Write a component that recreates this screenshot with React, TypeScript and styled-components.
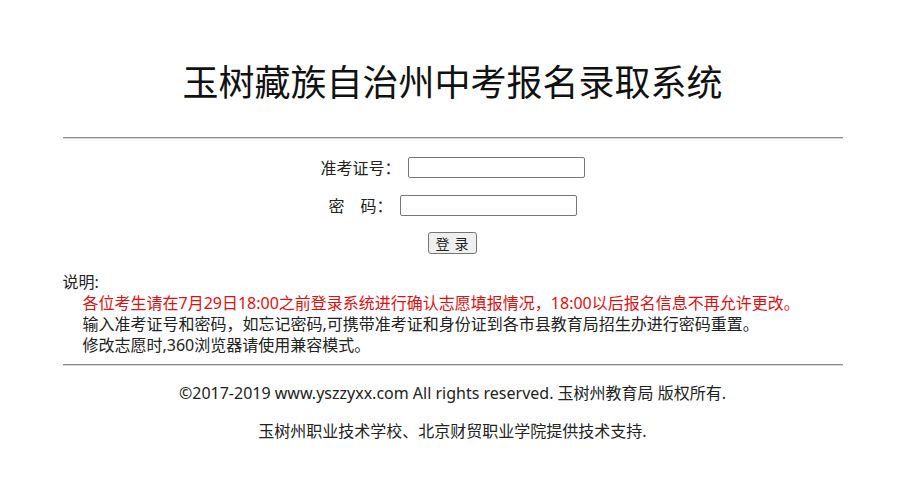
import React from "react";
import styled, { createGlobalStyle } from "styled-components";

const GlobalStyle = createGlobalStyle`
  html, body {
    margin: 0;
    padding: 0;
    background: #fff;
  }
  body {
    font-family: "Noto Sans", "Noto Sans CJK SC", sans-serif;
    color: #222;
    font-size: 16px;
  }
`;

const Page = styled.div`
  width: 780px;
  margin: 0 auto;
`;

const Title = styled.h1`
  margin: 58px 0 0;
  font-family: "Noto Sans CJK SC", sans-serif;
  font-size: 36px;
  font-weight: normal;
  line-height: 44px;
  text-align: center;
  color: #111;
`;

const Rule = styled.hr<{ $top: number }>`
  margin: ${(p) => p.$top}px 0 0;
  height: 0;
  border: none;
  border-top: 1px solid #8c8c8c;
  border-bottom: 1px solid #d8d8d8;
`;

const Form = styled.form`
  margin-top: 9px;
  display: flex;
  flex-direction: column;
  align-items: center;
`;

const Row = styled.div`
  height: 38px;
  display: flex;
  align-items: center;
  justify-content: center;
`;

const Label = styled.label`
  font-family: "Noto Sans CJK SC", sans-serif;
  font-size: 16px;
  line-height: 20px;
  white-space: pre;
`;

const TextInput = styled.input`
  box-sizing: border-box;
  width: 177px;
  height: 21px;
  margin-left: 7px;
  border: 1px solid #767676;
  border-radius: 2px;
  padding: 1px 2px;
  font-size: 13px;
  background: #fff;
`;

const SubmitButton = styled.button`
  box-sizing: border-box;
  width: 49px;
  height: 22px;
  padding: 0;
  border: 1px solid #767676;
  border-radius: 3px;
  background: #efefef;
  font-family: "Noto Sans CJK SC", sans-serif;
  font-size: 14px;
  line-height: 18px;
  letter-spacing: 1px;
  color: #222;
`;

const Notes = styled.div`
  margin-top: 10px;
  font-size: 16px;
  line-height: 21px;
`;

const NoteLine = styled.div<{ $red?: boolean }>`
  padding-left: ${(p) => (p.$red === undefined ? 0 : 20)}px;
  color: ${(p) => (p.$red ? "#e20f0f" : "#222")};
  white-space: nowrap;
`;

const Footer = styled.div`
  padding-top: 17px;
  text-align: center;
  font-size: 16px;
  line-height: 20px;
  color: #222;
`;

const FooterLine = styled.p`
  margin: 0 0 18px;
`;

export default function App() {
  return (
    <>
      <GlobalStyle />
      <Page>
        <Title>玉树藏族自治州中考报名录取系统</Title>
        <Rule $top={35} />
        <Form onSubmit={(e) => e.preventDefault()}>
          <Row>
            <Label htmlFor="zkzh">准考证号：</Label>
            <TextInput id="zkzh" type="text" />
          </Row>
          <Row>
            <Label htmlFor="mm">密　码：</Label>
            <TextInput id="mm" type="password" />
          </Row>
          <Row>
            <SubmitButton type="submit">登 录</SubmitButton>
          </Row>
        </Form>
        <Notes>
          <NoteLine>说明:</NoteLine>
          <NoteLine $red>
            各位考生请在7月29日18:00之前登录系统进行确认志愿填报情况，18:00以后报名信息不再允许更改。
          </NoteLine>
          <NoteLine $red={false}>
            输入准考证号和密码，如忘记密码,可携带准考证和身份证到各市县教育局招生办进行密码重置。
          </NoteLine>
          <NoteLine $red={false}>修改志愿时,360浏览器请使用兼容模式。</NoteLine>
        </Notes>
        <Rule $top={8} />
        <Footer>
          <FooterLine>
            ©2017-2019 www.yszzyxx.com All rights reserved. 玉树州教育局 版权所有.
          </FooterLine>
          <FooterLine>玉树州职业技术学校、北京财贸职业学院提供技术支持.</FooterLine>
        </Footer>
      </Page>
    </>
  );
}
